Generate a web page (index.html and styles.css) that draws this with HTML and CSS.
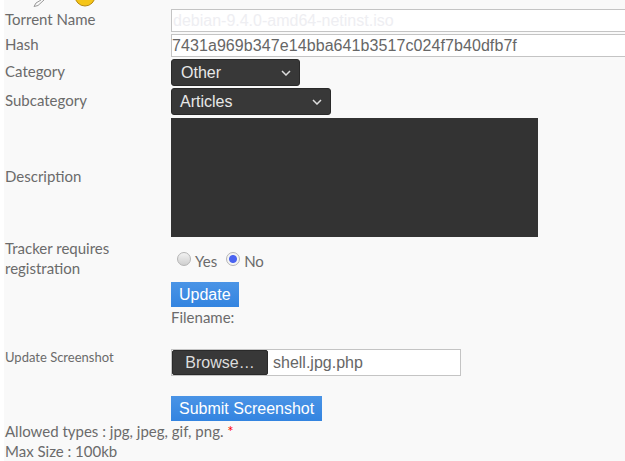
FILE: index.html
```html
<!DOCTYPE html>
<html lang="en">
<head>
  <meta charset="UTF-8">
  <title>Edit Torrent</title>
  <link rel="stylesheet" href="styles.css">
</head>
<body>
  <div class="page">
    <div class="top-icons">
      <svg class="pen-icon" width="14" height="7" viewBox="0 0 14 7"><path d="M1 6.5 L3 3 L8 0 M1 6.5 L5 5.5 L11 0" fill="none" stroke="#999" stroke-width="1"/></svg>
      <svg class="coin-icon" width="22" height="7" viewBox="0 0 22 7"><circle cx="11" cy="-4" r="10" fill="#f5c518" stroke="#b88a10"/></svg>
    </div>
    <form class="edit-form">
      <div class="row">
        <label class="lbl">Torrent Name</label>
        <input class="text-input name-input" type="text" placeholder="debian-9.4.0-amd64-netinst.iso">
      </div>
      <div class="row">
        <label class="lbl">Hash</label>
        <input class="text-input hash-input" type="text" value="7431a969b347e14bba641b3517c024f7b40dfb7f">
      </div>
      <div class="row">
        <label class="lbl">Category</label>
        <div class="fake-select cat-select">Other<svg width="10" height="6" viewBox="0 0 10 6"><path d="M1 1 L5 5 L9 1" fill="none" stroke="#ddd" stroke-width="1.5"/></svg></div>
      </div>
      <div class="row">
        <label class="lbl">Subcategory</label>
        <div class="fake-select sub-select">Articles<svg width="10" height="6" viewBox="0 0 10 6"><path d="M1 1 L5 5 L9 1" fill="none" stroke="#ddd" stroke-width="1.5"/></svg></div>
      </div>
      <div class="row desc-row">
        <label class="lbl">Description</label>
        <div class="desc-box"></div>
      </div>
      <div class="row tracker-row">
        <label class="lbl">Tracker requires registration</label>
        <div class="radios">
          <input class="radio" type="radio" name="reg" id="reg-yes"><label for="reg-yes">Yes</label>
          <input class="radio" type="radio" name="reg" id="reg-no" checked><label for="reg-no">No</label>
        </div>
      </div>
      <div class="row update-row">
        <span></span>
        <div>
          <button class="blue-btn" type="button">Update</button>
          <div class="filename">Filename:</div>
        </div>
      </div>
      <div class="row shot-row">
        <label class="lbl small-lbl">Update Screenshot</label>
        <div>
          <div class="file-box"><span class="browse">Browse…</span><span class="file-name">shell.jpg.php</span></div>
          <button class="blue-btn submit-btn" type="button">Submit Screenshot</button>
        </div>
      </div>
      <div class="notes">
        <p>Allowed types : jpg, jpeg, gif, png. <span class="req">*</span></p>
        <p>Max Size : 100kb</p>
      </div>
    </form>
  </div>
</body>
</html>
```

FILE: styles.css
```css
html, body {
  margin: 0;
  padding: 0;
  background: #fff;
}

body {
  height: 461px;
  overflow: hidden;
}

.page {
  margin-left: 4px;
  background: #f9f9f9;
  height: 461px;
  font-family: Lato, sans-serif;
  font-size: 15px;
  color: #6b6b6b;
}

.top-icons {
  height: 9px;
  display: flex;
  align-items: flex-start;
  padding-left: 29px;
}

.coin-icon {
  margin-left: 27px;
}

.row {
  display: grid;
  grid-template-columns: 166px 1fr;
  padding-left: 1px;
  align-items: center;
}

.lbl {
  padding-bottom: 6px;
}

.text-input {
  box-sizing: border-box;
  width: calc(100% + 4px);
  height: 23px;
  margin: 0 0 2px;
  padding: 0 1px;
  border: 1px solid #c4c4c4;
  background: #fff;
  font-family: "Liberation Sans", sans-serif;
  font-size: 16px;
  color: #666;
  outline: none;
}

.name-input::placeholder {
  color: #eeeef2;
  opacity: 1;
}

.hash-input {
  padding: 0;
  letter-spacing: 0.08px;
}

.fake-select {
  box-sizing: border-box;
  height: 27px;
  margin-bottom: 2px;
  padding: 0 8px 0 9px;
  display: flex;
  align-items: center;
  justify-content: space-between;
  background: #383838;
  border: 1px solid #2a2a2a;
  border-radius: 3px;
  font-family: "Liberation Sans", sans-serif;
  font-size: 16px;
  color: #e8e8e8;
}

.cat-select {
  width: 129px;
}

.sub-select {
  width: 160px;
  padding: 0 8px;
}

.desc-row {
  margin-top: 1px;
}

.desc-row .lbl {
  padding-bottom: 4px;
}

.desc-box {
  width: 367px;
  height: 119px;
  background: #333;
}

.tracker-row {
  height: 45px;
}

.tracker-row .lbl {
  line-height: 20px;
  padding-bottom: 4px;
}

.radios {
  display: flex;
  align-items: center;
  padding: 2px 0 0 6px;
}

.radio {
  appearance: none;
  -webkit-appearance: none;
  box-sizing: border-box;
  width: 14px;
  height: 14px;
  margin: 0 4px 3px 0;
  border: 1px solid #b5b5b5;
  border-radius: 50%;
  background: linear-gradient(#f2f2f2, #cfcfcf);
}

.radio:checked {
  background: radial-gradient(circle, #4a63f0 0, #4a63f0 3.5px, #f4f4f4 4.5px);
}

.radios label {
  margin-right: 9px;
}

.update-row {
  align-items: start;
}

.blue-btn {
  display: block;
  height: 25px;
  padding: 0 8px;
  border: 0;
  background: linear-gradient(#4a94e6, #3384e0);
  font-family: "Liberation Sans", sans-serif;
  font-size: 16px;
  color: #fff;
}

.filename {
  margin-top: 1px;
  line-height: 18px;
}

.shot-row {
  align-items: start;
  margin-top: 23px;
}

.small-lbl {
  font-size: 13px;
  padding: 0;
}

.file-box {
  box-sizing: border-box;
  display: flex;
  align-items: center;
  width: 290px;
  height: 27px;
  border: 1px solid #c4c4c4;
  background: #fff;
  font-family: "Liberation Sans", sans-serif;
  font-size: 16px;
}

.browse {
  box-sizing: border-box;
  width: 96px;
  height: 25px;
  line-height: 23px;
  text-align: center;
  background: #383838;
  border: 1px solid #2a2a2a;
  border-radius: 2px;
  color: #ddd;
}

.file-name {
  margin-left: 5px;
  color: #666;
}

.submit-btn {
  margin-top: 20px;
}

.notes p {
  margin: 0;
  padding-left: 1px;
  line-height: 20px;
}

.req {
  color: #f00;
}
```
